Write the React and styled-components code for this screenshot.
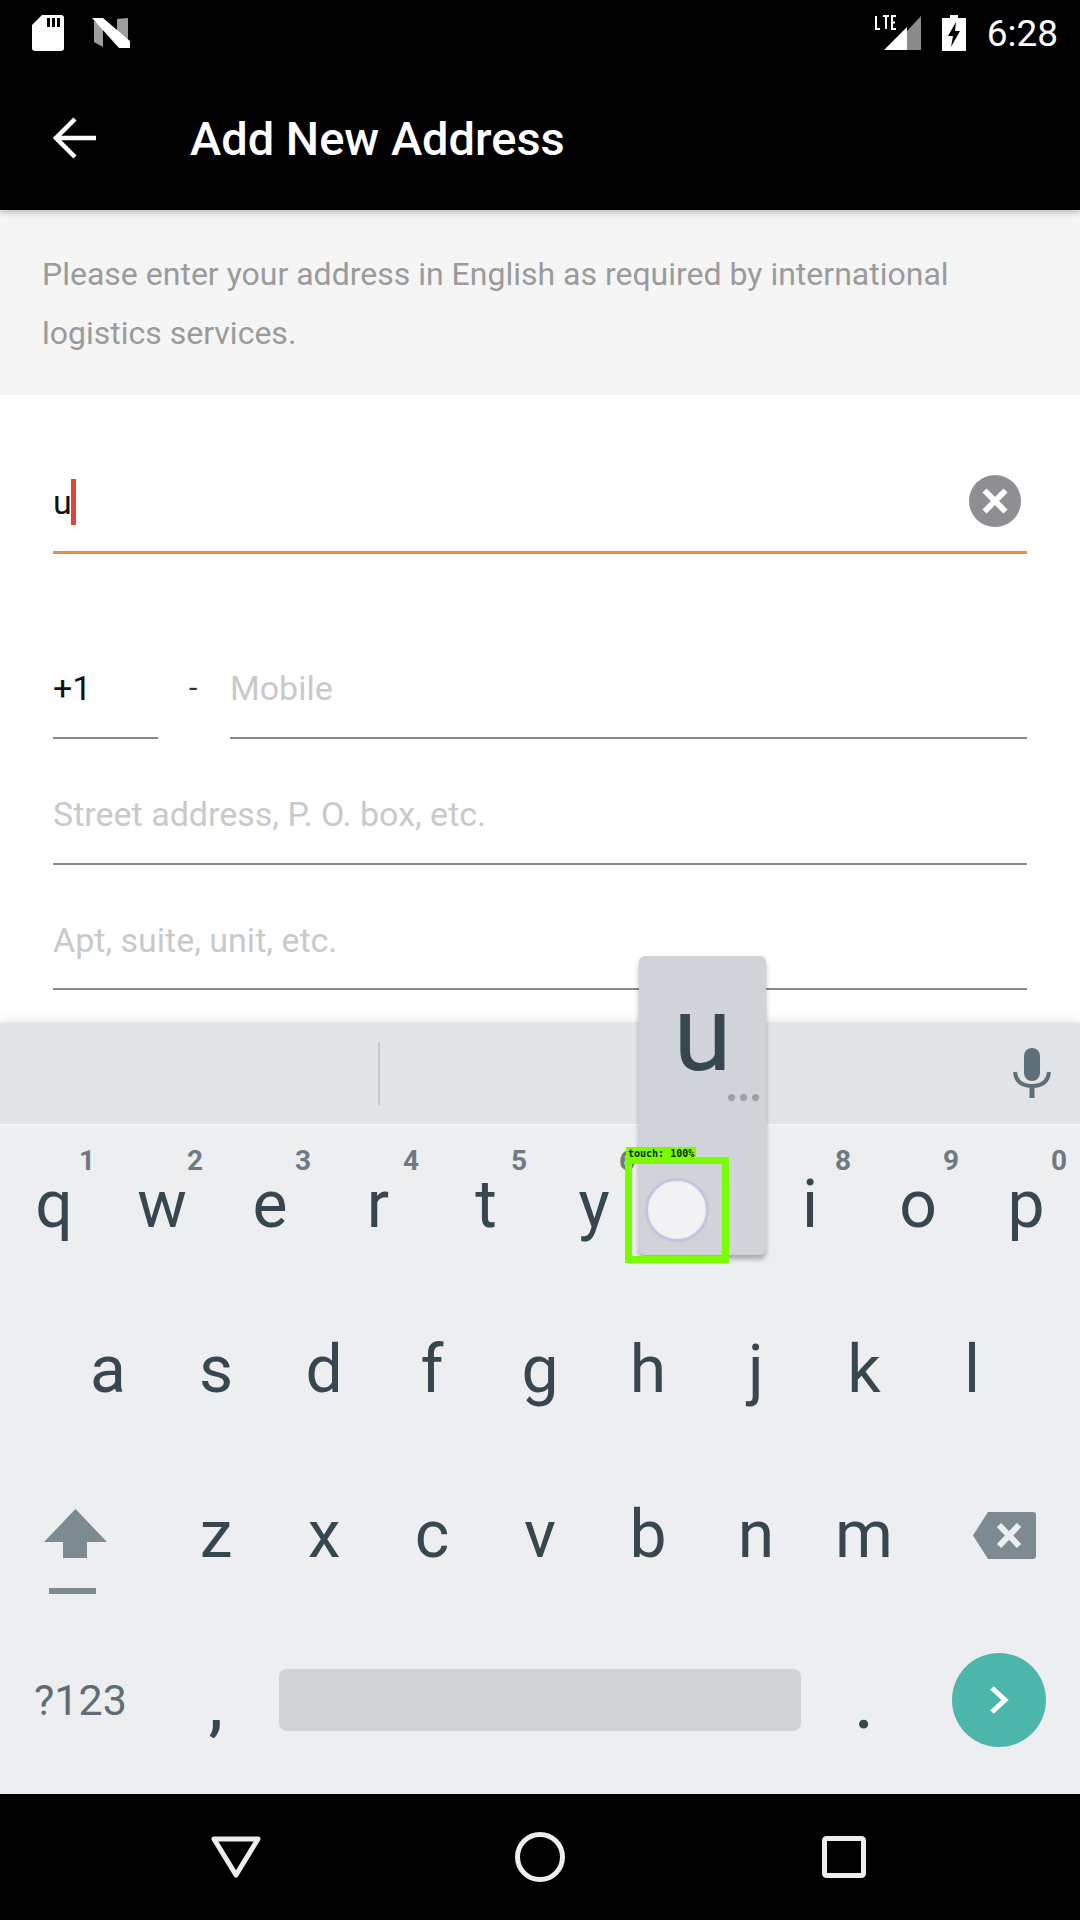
import styled, { createGlobalStyle } from "styled-components";

const GlobalStyle = createGlobalStyle`
  html, body {
    margin: 0;
    padding: 0;
    background: #fff;
    font-family: Roboto, "Noto Sans", sans-serif;
  }
`;

const Page = styled.div`
  width: 1080px;
  height: 1920px;
  display: flex;
  flex-direction: column;
  overflow: hidden;
`;

const Header = styled.header`
  height: 210px;
  background: #000;
  color: #fff;
  box-shadow: 0 3px 6px rgba(0, 0, 0, 0.22);
  position: relative;
  z-index: 2;
`;

const StatusBar = styled.div`
  height: 66px;
  display: flex;
  align-items: center;
  padding: 0 22px 0 32px;
`;

const StatusGroup = styled.div`
  display: flex;
  align-items: center;
  gap: ${(props) => props.$gap}px;
  margin-left: ${(props) => (props.$end ? "auto" : "0")};
`;

const Time = styled.span`
  font-size: 37px;
  font-weight: 400;
`;

const Toolbar = styled.div`
  height: 144px;
  display: flex;
  align-items: center;
  padding-left: 53px;
  box-sizing: border-box;
`;

const Title = styled.h1`
  margin: 0 0 0 93px;
  font-size: 47px;
  font-weight: 500;
`;

const Notice = styled.p`
  margin: 0;
  height: 185px;
  box-sizing: border-box;
  padding: 35px 42px 0;
  background: #f5f5f5;
  color: #9b9b9b;
  font-size: 32px;
  line-height: 59px;
`;

const Form = styled.main`
  flex: 1;
  background: #fff;
  padding: 0 53px;
`;

const Field = styled.div`
  height: ${(props) => props.$height}px;
  box-sizing: border-box;
  display: flex;
  align-items: center;
  padding-top: ${(props) => props.$top}px;
  border-bottom: ${(props) => (props.$active ? "3px solid #f08a45" : "2px solid #8a8a8a")};
  font-size: 34px;
  color: ${(props) => (props.$placeholder ? "#c9c9c9" : "#111")};
`;

const Caret = styled.span`
  width: 5px;
  height: 46px;
  background: #e2453c;
  margin-left: -1px;
`;

const ClearButton = styled.span`
  margin: 0 6px 3px auto;
  width: 52px;
  height: 52px;
  border-radius: 50%;
  background: #8e8e93;
  display: flex;
  align-items: center;
  justify-content: center;
`;

const PhoneRow = styled.div`
  display: flex;
`;

const CodeField = styled(Field)`
  width: 105px;
`;

const Dash = styled.span`
  width: 72px;
  height: 185px;
  box-sizing: border-box;
  padding: 116px 0 0 31px;
  font-size: 30px;
  color: #333;
`;

const MobileField = styled(Field)`
  flex: 1;
`;

const Keyboard = styled.section`
  height: 772px;
  background: #eceef0;
  position: relative;
  z-index: 1;
  box-shadow: 0 -5px 8px rgba(0, 0, 0, 0.05);
`;

const SuggestionStrip = styled.div`
  height: 104px;
  background: #e3e4e6;
  border-bottom: 2px solid #f3f4f5;
  box-sizing: border-box;
  display: flex;
  align-items: center;
  padding: 0 29px 0 378px;
`;

const StripDivider = styled.span`
  width: 2px;
  height: 63px;
  background: #c6c9cb;
`;

const MicSlot = styled.span`
  margin-left: auto;
  display: flex;
`;

const KeyRow = styled.div`
  height: 165px;
  display: flex;
  align-items: center;
  padding: 0 ${(props) => props.$inset || 0}px;
`;

const Key = styled.span`
  width: 108px;
  height: 100%;
  position: relative;
  box-sizing: border-box;
  padding-bottom: 8px;
  display: flex;
  align-items: center;
  justify-content: center;
  font-size: 66px;
  color: #37474f;
`;

const Hint = styled.span`
  position: absolute;
  top: 18px;
  left: 79px;
  font-size: 28px;
  font-weight: 700;
  color: #6d7a83;
`;

const IconKey = styled.span`
  width: 162px;
  display: flex;
  justify-content: ${(props) => props.$justify};
  padding: ${(props) => props.$padding};
  box-sizing: border-box;
`;

const BottomRow = styled.div`
  height: 157px;
  display: grid;
  grid-template-columns: 162px 108px 1fr 108px 162px;
  align-items: center;
`;

const ModeKey = styled.span`
  padding-left: 34px;
  font-size: 43px;
  color: #5f6d76;
`;

const PunctKey = styled.span`
  text-align: center;
  font-size: 66px;
  font-weight: 500;
  line-height: 62px;
  color: #37474f;
  padding-top: 12px;
`;

const SpaceBar = styled.span`
  margin: 0 9px;
  height: 62px;
  border-radius: 8px;
  background: #d0d3d6;
`;

const GoButton = styled.span`
  justify-self: center;
  width: 94px;
  height: 94px;
  border-radius: 50%;
  background: #4db6ac;
  display: flex;
  align-items: center;
  justify-content: center;
`;

const KeyPreview = styled.div`
  position: absolute;
  top: -66px;
  left: 639px;
  width: 127px;
  height: 299px;
  border-radius: 6px;
  background: #d0d3d7;
  box-shadow: 0 4px 5px rgba(0, 0, 0, 0.3);
  box-sizing: border-box;
  padding-top: 28px;
  display: flex;
  flex-direction: column;
  align-items: center;
`;

const PreviewLetter = styled.span`
  font-size: 106px;
  line-height: 100px;
  color: #37474f;
`;

const PreviewDots = styled.span`
  display: flex;
  gap: 5px;
  align-self: flex-end;
  margin: 10px 7px 0 0;
`;

const Dot = styled.span`
  width: 7px;
  height: 7px;
  border-radius: 50%;
  background: #9aa1a7;
`;

const TouchBox = styled.div`
  position: absolute;
  top: 135px;
  left: 625px;
  width: 104px;
  height: 106px;
  box-sizing: border-box;
  border: 7px solid #7cfc00;
  display: flex;
  align-items: center;
  justify-content: center;
`;

const TouchLabel = styled.span`
  position: absolute;
  top: -17px;
  left: -6px;
  height: 14px;
  padding: 0 2px;
  background: #7cfc00;
  color: #0a2a00;
  font-family: "DejaVu Sans Mono", monospace;
  font-size: 10px;
  font-weight: 700;
  line-height: 14px;
  white-space: nowrap;
`;

const TouchDot = styled.span`
  width: 58px;
  height: 58px;
  border-radius: 50%;
  background: radial-gradient(circle, #f3f3f5 60%, #e6e7ec 100%);
  border: 3px solid #c0c6df;
  flex: none;
`;

const NavBar = styled.nav`
  height: 126px;
  background: #000;
  display: flex;
  align-items: center;
  justify-content: center;
  position: relative;
  z-index: 1;
`;

const NavSlot = styled.span`
  width: 304px;
  display: flex;
  justify-content: center;
`;

const SdIcon = () => (
  <svg width="32" height="36" viewBox="0 0 32 36">
    <path d="M10 0H29a3 3 0 0 1 3 3V33a3 3 0 0 1-3 3H3a3 3 0 0 1-3-3V10Z" fill="#fff" />
    <path d="M15 3h3v9h-3zM20 3h3v9h-3zM25 3h3v9h-3z" fill="#000" />
  </svg>
);

const NougatIcon = () => (
  <svg width="38" height="30" viewBox="0 0 38 30">
    <path d="M2 3 11 8V29L2 24Z" fill="#9e9e9e" />
    <path d="M25 1 36 0V21L25 16Z" fill="#9e9e9e" />
    <path d="M0 0 11 0 38 23V30H27Z" fill="#fff" />
  </svg>
);

const SignalIcon = () => (
  <svg width="46" height="36" viewBox="0 0 46 36">
    <path d="M32 35H46V1L32 16Z" fill="#8a8a8a" />
    <path d="M9 35 32 12V35Z" fill="#fff" />
    <path
      d="M1 1V14H5M8 1H14M11 1V14M21 1H17V14H21M17 7.5H20"
      fill="none"
      stroke="#fff"
      strokeWidth="2"
    />
  </svg>
);

const BatteryIcon = () => (
  <svg width="24" height="36" viewBox="0 0 24 36">
    <path d="M8 0H16V3H24V36H0V3H8Z" fill="#fff" />
    <path d="M14 7 6 21H11L9 32 18 16H13Z" fill="#000" />
  </svg>
);

const BackArrow = () => (
  <svg width="44" height="42" viewBox="0 0 44 42">
    <path d="M43 21H3M22 2 3 21 22 40" fill="none" stroke="#fff" strokeWidth="4.5" />
  </svg>
);

const CrossIcon = ({ size, color, width }) => (
  <svg width={size} height={size} viewBox="0 0 24 24">
    <path d="M3 3 21 21M21 3 3 21" fill="none" stroke={color} strokeWidth={width} />
  </svg>
);

const MicIcon = () => (
  <svg width="38" height="50" viewBox="0 0 38 50">
    <rect x="11" y="0" width="16" height="33" rx="8" fill="#5f6f7a" />
    <path d="M2 24C3 34 10 38 19 38S35 34 36 24" fill="none" stroke="#5f6f7a" strokeWidth="4" />
    <path d="M19 38V50" stroke="#5f6f7a" strokeWidth="5" />
  </svg>
);

const ShiftIcon = () => (
  <svg width="63" height="85" viewBox="0 0 63 85">
    <path d="M31.5 0 63 33H43V49H19V33H0Z" fill="#7d8a91" />
    <rect x="5" y="79" width="47" height="6" fill="#7d8a91" />
  </svg>
);

const BackspaceIcon = () => (
  <svg width="63" height="47" viewBox="0 0 63 47">
    <path d="M15 0H60a3 3 0 0 1 3 3V44a3 3 0 0 1-3 3H15L0 23.5Z" fill="#7d8a91" />
    <path d="M26 13 46 34M46 13 26 34" stroke="#eceef0" strokeWidth="6" />
  </svg>
);

const ChevronIcon = () => (
  <svg width="20" height="30" viewBox="0 0 20 30">
    <path d="M3 3 16 15 3 27" fill="none" stroke="#fff" strokeWidth="5" />
  </svg>
);

const TOP_ROW = [
  ["q", "1"],
  ["w", "2"],
  ["e", "3"],
  ["r", "4"],
  ["t", "5"],
  ["y", "6"],
  ["u", "7"],
  ["i", "8"],
  ["o", "9"],
  ["p", "0"],
];

const App = () => {
  return (
    <Page>
      <GlobalStyle />
      <Header>
        <StatusBar>
          <StatusGroup $gap={28}>
            <SdIcon />
            <NougatIcon />
          </StatusGroup>
          <StatusGroup $end $gap={21}>
            <SignalIcon />
            <BatteryIcon />
            <Time>6:28</Time>
          </StatusGroup>
        </StatusBar>
        <Toolbar>
          <BackArrow />
          <Title>Add New Address</Title>
        </Toolbar>
      </Header>

      <Notice>
        Please enter your address in English as required by international logistics services.
      </Notice>

      <Form>
        <Field $active $height={159} $top={58}>
          u<Caret />
          <ClearButton>
            <CrossIcon size={28} color="#fff" width={5} />
          </ClearButton>
        </Field>
        <PhoneRow>
          <CodeField $height={185} $top={84}>+1</CodeField>
          <Dash>-</Dash>
          <MobileField $height={185} $top={84} $placeholder>Mobile</MobileField>
        </PhoneRow>
        <Field $height={126} $top={26} $placeholder>Street address, P. O. box, etc.</Field>
        <Field $height={125} $top={26} $placeholder>Apt, suite, unit, etc.</Field>
      </Form>

      <Keyboard>
        <SuggestionStrip>
          <StripDivider />
          <MicSlot>
            <MicIcon />
          </MicSlot>
        </SuggestionStrip>

        <KeyRow>
          {TOP_ROW.map(([letter, hint]) => (
            <Key key={letter}>
              {letter}
              <Hint>{hint}</Hint>
            </Key>
          ))}
        </KeyRow>
        <KeyRow $inset={54}>
          {["a", "s", "d", "f", "g", "h", "j", "k", "l"].map((letter) => (
            <Key key={letter}>{letter}</Key>
          ))}
        </KeyRow>
        <KeyRow>
          <IconKey $justify="flex-start" $padding="26px 0 0 44px">
            <ShiftIcon />
          </IconKey>
          {["z", "x", "c", "v", "b", "n", "m"].map((letter) => (
            <Key key={letter}>{letter}</Key>
          ))}
          <IconKey $justify="flex-end" $padding="0 44px 6px 0">
            <BackspaceIcon />
          </IconKey>
        </KeyRow>
        <BottomRow>
          <ModeKey>?123</ModeKey>
          <PunctKey>,</PunctKey>
          <SpaceBar />
          <PunctKey>.</PunctKey>
          <GoButton>
            <ChevronIcon />
          </GoButton>
        </BottomRow>

        <KeyPreview>
          <PreviewLetter>u</PreviewLetter>
          <PreviewDots>
            <Dot />
            <Dot />
            <Dot />
          </PreviewDots>
        </KeyPreview>
        <TouchBox>
          <TouchLabel>touch: 100%</TouchLabel>
          <TouchDot />
        </TouchBox>
      </Keyboard>

      <NavBar>
        <NavSlot>
          <svg width="50" height="42" viewBox="0 0 50 42">
            <path d="M3 3H47L25 39Z" fill="none" stroke="#eee" strokeWidth="5" strokeLinejoin="round" />
          </svg>
        </NavSlot>
        <NavSlot>
          <svg width="50" height="50" viewBox="0 0 50 50">
            <circle cx="25" cy="25" r="22.5" fill="none" stroke="#eee" strokeWidth="5" />
          </svg>
        </NavSlot>
        <NavSlot>
          <svg width="44" height="42" viewBox="0 0 44 42">
            <rect x="2.5" y="2.5" width="39" height="37" rx="2" fill="none" stroke="#eee" strokeWidth="5" />
          </svg>
        </NavSlot>
      </NavBar>
    </Page>
  );
};

export default App;
